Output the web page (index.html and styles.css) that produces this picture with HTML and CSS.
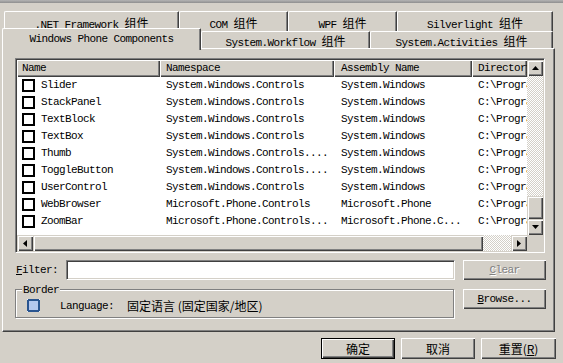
FILE: index.html
```html
<!DOCTYPE html>
<html>
<head>
<meta charset="utf-8">
<link rel="stylesheet" href="styles.css">
</head>
<body>
<div class="window ui">
  <div class="topedge"></div>
  <div class="tabrow back">
    <div class="tab t-net">.NET Framework <span class="cjk">组件</span></div>
    <div class="tab t-com">COM <span class="cjk">组件</span></div>
    <div class="tab t-wpf">WPF <span class="cjk">组件</span></div>
    <div class="tab t-sl">Silverlight <span class="cjk">组件</span></div>
  </div>
  <div class="tabrow front">
    <div class="tab t-wp selected">Windows Phone Components</div>
    <div class="tab t-wf">System.Workflow <span class="cjk">组件</span></div>
    <div class="tab t-sa">System.Activities <span class="cjk">组件</span></div>
  </div>
  <div class="panel">
    <div class="listview">
      <div class="lv-view">
        <div class="lv-header">
          <div class="hcell c1">Name</div>
          <div class="hcell c2">Namespace</div>
          <div class="hcell c3">Assembly Name</div>
          <div class="hcell c4">Directory</div>
        </div>
        <div class="lv-row"><div class="cell c1"><span class="chk"></span>Slider</div><div class="cell c2">System.Windows.Controls</div><div class="cell c3">System.Windows</div><div class="cell c4">C:\Program Files</div></div>
        <div class="lv-row"><div class="cell c1"><span class="chk"></span>StackPanel</div><div class="cell c2">System.Windows.Controls</div><div class="cell c3">System.Windows</div><div class="cell c4">C:\Program Files</div></div>
        <div class="lv-row"><div class="cell c1"><span class="chk"></span>TextBlock</div><div class="cell c2">System.Windows.Controls</div><div class="cell c3">System.Windows</div><div class="cell c4">C:\Program Files</div></div>
        <div class="lv-row"><div class="cell c1"><span class="chk"></span>TextBox</div><div class="cell c2">System.Windows.Controls</div><div class="cell c3">System.Windows</div><div class="cell c4">C:\Program Files</div></div>
        <div class="lv-row"><div class="cell c1"><span class="chk"></span>Thumb</div><div class="cell c2">System.Windows.Controls....</div><div class="cell c3">System.Windows</div><div class="cell c4">C:\Program Files</div></div>
        <div class="lv-row"><div class="cell c1"><span class="chk"></span>ToggleButton</div><div class="cell c2">System.Windows.Controls....</div><div class="cell c3">System.Windows</div><div class="cell c4">C:\Program Files</div></div>
        <div class="lv-row"><div class="cell c1"><span class="chk"></span>UserControl</div><div class="cell c2">System.Windows.Controls</div><div class="cell c3">System.Windows</div><div class="cell c4">C:\Program Files</div></div>
        <div class="lv-row"><div class="cell c1"><span class="chk"></span>WebBrowser</div><div class="cell c2">Microsoft.Phone.Controls</div><div class="cell c3">Microsoft.Phone</div><div class="cell c4">C:\Program Files</div></div>
        <div class="lv-row"><div class="cell c1"><span class="chk"></span>ZoomBar</div><div class="cell c2">Microsoft.Phone.Controls...</div><div class="cell c3">Microsoft.Phone.C...</div><div class="cell c4">C:\Program Files</div></div>
      </div>
      <div class="vscroll">
        <div class="sb-btn"><svg width="7" height="4" viewBox="0 0 7 4"><polygon points="3.5,0 7,4 0,4" fill="#000"/></svg></div>
        <div class="sb-track"></div>
        <div class="sb-thumb v"></div>
        <div class="sb-btn"><svg width="7" height="4" viewBox="0 0 7 4"><polygon points="0,0 7,0 3.5,4" fill="#000"/></svg></div>
      </div>
      <div class="hscroll">
        <div class="sb-btn"><svg width="4" height="7" viewBox="0 0 4 7"><polygon points="4,0 4,7 0,3.5" fill="#000"/></svg></div>
        <div class="sb-thumb h"></div>
        <div class="sb-track"></div>
        <div class="sb-btn"><svg width="4" height="7" viewBox="0 0 4 7"><polygon points="0,0 4,3.5 0,7" fill="#000"/></svg></div>
      </div>
      <div class="corner"></div>
    </div>

    <div class="filter-row">
      <label class="flabel"><u>F</u>ilter:</label>
      <div class="input"></div>
      <div class="btn side disabled"><span><u>C</u>lear</span></div>
    </div>

    <div class="group-row">
      <div class="group">
        <span class="legend">Border</span>
        <svg class="gicon" width="13" height="13" viewBox="0 0 13 13">
          <rect x="0" y="0" width="13" height="13" fill="#2a5590"/>
          <rect x="2" y="2" width="9" height="9" fill="#b4c8ee"/>
          <rect x="0" y="0" width="1" height="1" fill="#e8eef8"/>
          <rect x="12" y="0" width="1" height="1" fill="#e8eef8"/>
          <rect x="0" y="12" width="1" height="1" fill="#e8eef8"/>
          <rect x="12" y="12" width="1" height="1" fill="#e8eef8"/>
        </svg>
        <span class="lang-label">Language:</span>
        <span class="lang-value">固定语言 (固定国家/地区)</span>
      </div>
      <div class="btn side"><span><u>B</u>rowse...</span></div>
    </div>
  </div>

  <div class="buttons">
    <div class="btn dlg default"><span>确定</span></div>
    <div class="btn dlg"><span>取消</span></div>
    <div class="btn dlg wide"><span>重置(<u>R</u>)</span></div>
  </div>
</div>
</body>
</html>
```
FILE: styles.css
```css
html, body {
  margin: 0;
  padding: 0;
  background: #d4d0c8;
}

.window {
  width: 563px;
  height: 363px;
  overflow: hidden;
  background: #d4d0c8;
  color: #000;
}

.ui {
  font-family: "Liberation Mono", "Noto Sans CJK SC", monospace;
  font-size: 11px;
  letter-spacing: -0.6px;
}

.cjk {
  font-family: "Noto Sans CJK SC", sans-serif;
  font-size: 12px;
  letter-spacing: 0;
}

.topedge {
  height: 3px;
  background: linear-gradient(#b4b4b4, #8e8e8e);
}

/* Tabs */
.tabrow {
  display: flex;
}
.tabrow.back {
  margin-top: 8px;
  padding-left: 4px;
  height: 20px;
}
.tabrow.front {
  margin-top: -3px;
  padding-left: 2px;
  height: 22px;
  align-items: flex-end;
  position: relative;
  z-index: 1;
}

.tab {
  box-sizing: border-box;
  height: 20px;
  padding-top: 4px;
  line-height: 14px;
  text-align: center;
  white-space: nowrap;
  background: #d4d0c8;
  border-top: 1px solid #fff;
  border-left: 1px solid #fff;
  border-right: 1px solid #404040;
  border-top-left-radius: 2px;
  border-top-right-radius: 1px;
  box-shadow: inset -1px 0 #808080;
}
.tabrow.front .tab {
  height: 17px;
  margin-bottom: 2px;
  padding-top: 2px;
}
.tabrow.front .tab.selected {
  height: 22px;
  margin-bottom: 0;
  padding-top: 3px;
}

.t-net { width: 175px; }
.t-com { width: 109px; }
.t-wpf { width: 109px; }
.t-sl  { width: 156px; }
.t-wp  { width: 199px; }
.t-wf  { width: 169px; }
.t-sa  { width: 183px; }

/* Panel */
.panel {
  box-sizing: border-box;
  margin-top: -2px;
  margin-left: 2px;
  width: 553px;
  height: 284px;
  border-top: 1px solid #fff;
  border-left: 1px solid #fff;
  border-right: 1px solid #404040;
  border-bottom: 1px solid #404040;
  box-shadow: inset -1px -1px #808080;
  padding-top: 9px;
}

/* List view */
.listview {
  box-sizing: border-box;
  margin-left: 12px;
  width: 530px;
  height: 195px;
  border: 1px solid;
  border-color: #808080 #fff #fff #808080;
  box-shadow: inset 1px 1px #404040, inset -1px -1px #d4d0c8;
  padding: 1px;
  display: grid;
  grid-template-columns: 510px 16px;
  grid-template-rows: 175px 16px;
}

.lv-view {
  background: #fff;
  overflow: hidden;
  white-space: nowrap;
}

.lv-header, .lv-row {
  display: grid;
  grid-template-columns: 143px 174px 138px 55px;
}
.lv-header {
  height: 17px;
}
.hcell {
  background: #d4d0c8;
  line-height: 17px;
  box-shadow: inset 1px 1px #fff, inset -1px -1px #404040, inset -2px -2px #808080;
  overflow: hidden;
}
.lv-row {
  height: 17px;
}
.cell {
  line-height: 17px;
  overflow: hidden;
  display: flex;
  align-items: center;
}
.c1 { padding-left: 5px; }
.c2 { padding-left: 6px; }
.c3 { padding-left: 7px; }
.c4 { padding-left: 6px; }

.chk {
  box-sizing: border-box;
  width: 13px;
  height: 13px;
  border: 2px solid #000;
  background: #fff;
  margin-right: 6px;
  flex: none;
}

/* Scrollbars */
.vscroll {
  display: flex;
  flex-direction: column;
}
.hscroll {
  display: flex;
}
.sb-btn {
  box-sizing: border-box;
  width: 16px;
  height: 16px;
  flex: none;
  background: #d4d0c8;
  box-shadow: inset 1px 1px #d4d0c8, inset 2px 2px #fff, inset -1px -1px #404040, inset -2px -2px #808080;
  display: flex;
  align-items: center;
  justify-content: center;
}
.sb-track {
  flex: 1;
  background-color: #d4d0c8;
  background-image: repeating-conic-gradient(#fff 0 25%, #d4d0c8 0 50%);
  background-size: 2px 2px;
}
.sb-thumb {
  flex: none;
  background: #d4d0c8;
  box-shadow: inset 1px 1px #d4d0c8, inset 2px 2px #fff, inset -1px -1px #404040, inset -2px -2px #808080;
}
.sb-thumb.v { height: 23px; }
.sb-thumb.h { width: 450px; }
.corner {
  background: #d4d0c8;
}

/* Filter row */
.filter-row {
  display: flex;
  align-items: center;
  margin-top: 7px;
  padding-left: 13px;
  height: 20px;
}
.flabel {
  width: 50px;
}
.input {
  box-sizing: border-box;
  width: 389px;
  height: 20px;
  background: #fff;
  border: 1px solid;
  border-color: #808080 #fff #fff #808080;
  box-shadow: inset 1px 1px #404040, inset -1px -1px #d4d0c8;
}

.btn {
  box-sizing: border-box;
  background: #d4d0c8;
  box-shadow: inset 1px 1px #fff, inset -1px -1px #404040, inset -2px -2px #808080;
  display: flex;
  align-items: center;
  justify-content: center;
  white-space: nowrap;
}
.btn.side {
  width: 83px;
  height: 20px;
  margin-left: 8px;
}
.btn.disabled {
  color: #808080;
  text-shadow: 1px 1px #fff;
}

/* Group row */
.group-row {
  display: flex;
  align-items: flex-start;
  margin-top: 9px;
  padding-left: 12px;
}
.group {
  position: relative;
  box-sizing: border-box;
  width: 439px;
  height: 29px;
  border: 1px solid #808080;
  box-shadow: inset 1px 1px #fff, 1px 1px #fff;
  display: flex;
  align-items: center;
  padding-left: 11px;
  padding-top: 4px;
}
.group + .btn.side {
  margin-left: 9px;
}
.legend {
  position: absolute;
  top: -7px;
  left: 6px;
  padding: 0 1px;
  line-height: 14px;
  background: #d4d0c8;
}
.gicon {
  flex: none;
  margin-right: 20px;
}
.lang-label {
  margin-right: 13px;
}
.lang-value {
  font-family: "Noto Sans CJK SC", sans-serif;
  font-size: 12px;
  letter-spacing: 0;
}

/* Dialog buttons */
.buttons {
  display: flex;
  justify-content: flex-end;
  gap: 6px;
  margin-top: 6px;
  padding-right: 7px;
}
.btn.dlg {
  width: 74px;
  height: 21px;
  font-family: "Noto Sans CJK SC", sans-serif;
  font-size: 12px;
  letter-spacing: 0;
}
.btn.dlg.wide {
  width: 75px;
}
.btn.default {
  border: 1px solid #000;
}
```
